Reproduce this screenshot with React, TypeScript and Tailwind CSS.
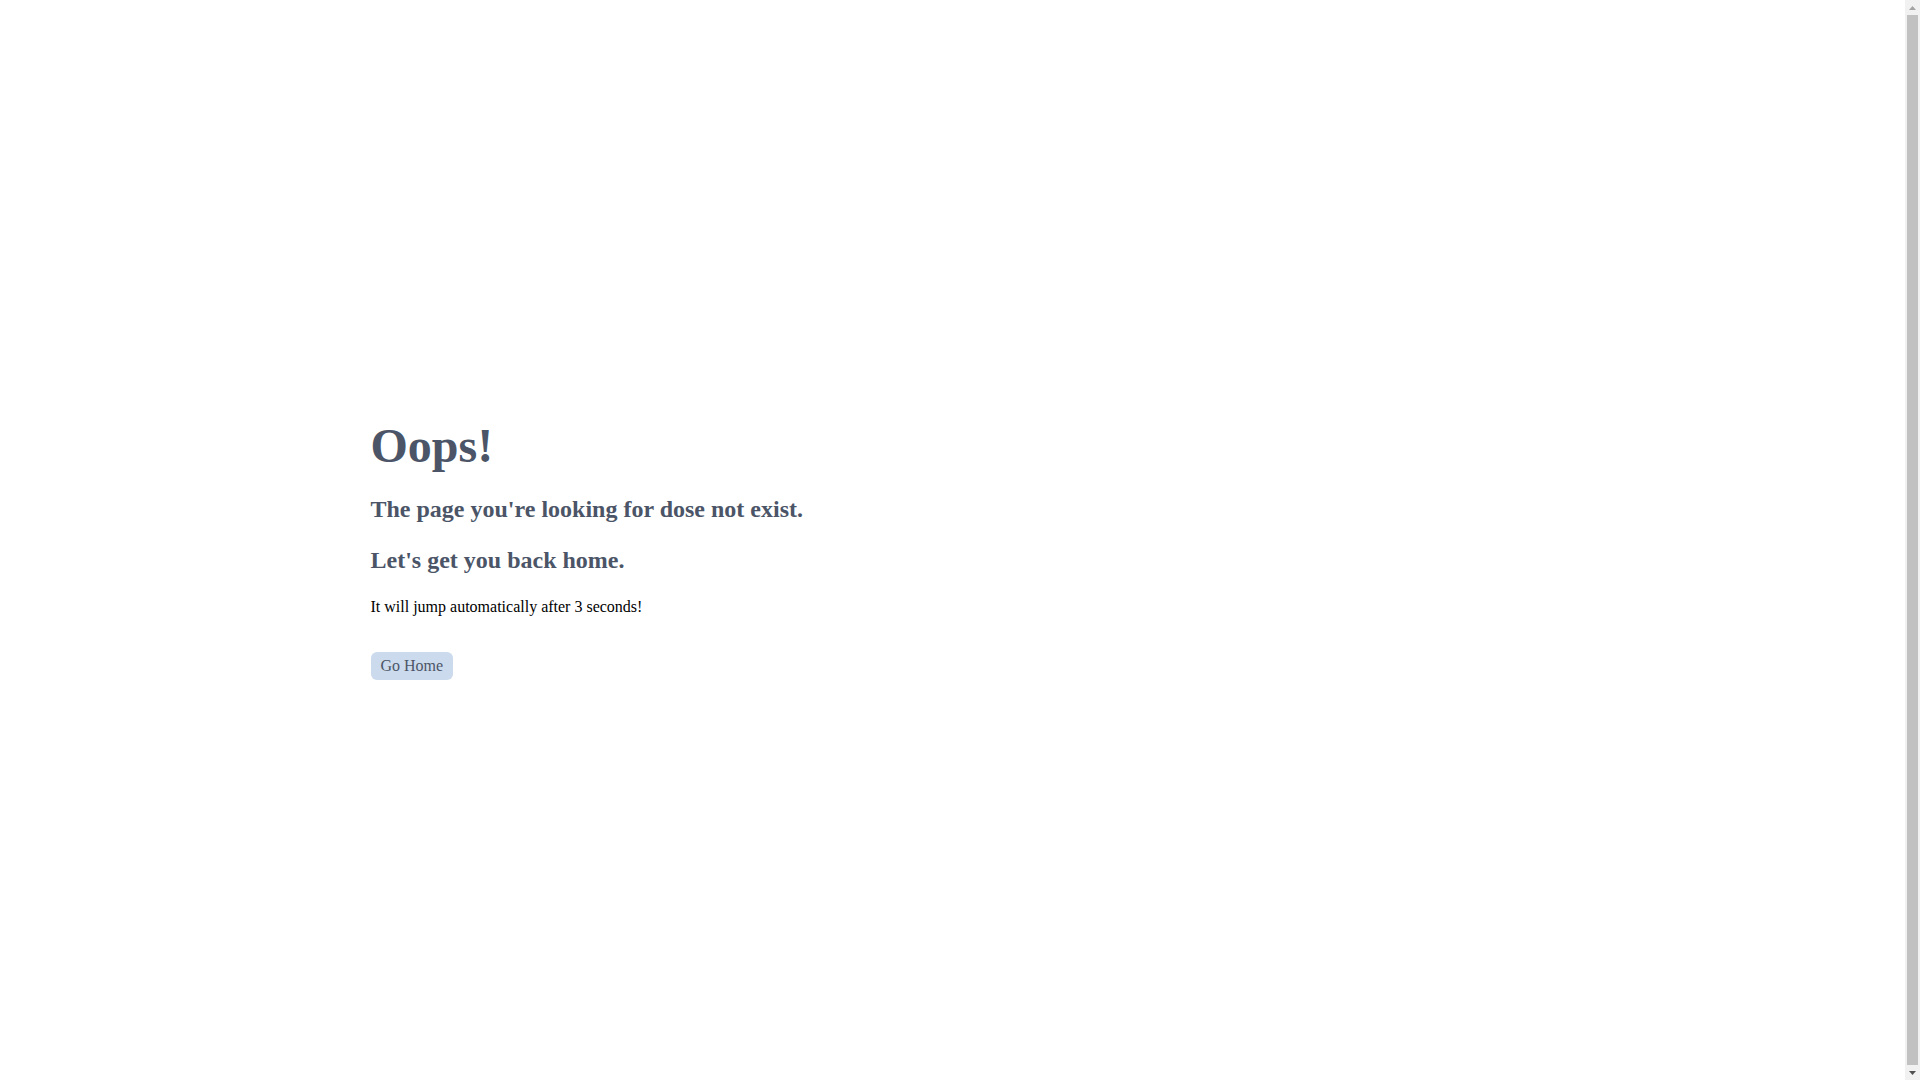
export default function App() {
  return (
    <div className="flex h-screen bg-white font-['Liberation_Serif','Times_New_Roman',serif]">
      <div className="flex-1 overflow-hidden">
        <main className="flex min-h-[1101px] items-center">
          <div className="mx-auto w-full max-w-[1164px]">
            <h1 className="text-5xl leading-none font-bold text-[#4b5567]">Oops!</h1>
            <h2 className="mt-[23px] text-2xl leading-8 font-bold text-[#4b5567]">
              The page you're looking for dose not exist.
            </h2>
            <h3 className="mt-[19px] text-2xl leading-8 font-bold text-[#4b5567]">
              Let's get you back home.
            </h3>
            <p className="mt-[19px] text-base leading-6 text-black">
              It will jump automatically after 3 seconds!
            </p>
            <a
              href="#"
              className="mt-[33px] inline-block rounded-md bg-[#cbdaed] px-2.5 py-0.5 text-base leading-6 text-[#4b5567]"
            >
              Go Home
            </a>
          </div>
        </main>
      </div>
      {/* page scrollbar */}
      <div className="flex w-[15px] flex-col bg-[#f1f1f1]">
        <div className="flex h-[15px] items-center justify-center">
          <svg width="7" height="4" viewBox="0 0 7 4">
            <path d="M0 4 L3.5 0 L7 4 Z" fill="#a3a3a3" />
          </svg>
        </div>
        <div className="mx-[2px] flex-1 bg-[#c1c1c1]" />
        <div className="flex h-[15px] items-center justify-center">
          <svg width="7" height="4" viewBox="0 0 7 4">
            <path d="M0 0 L3.5 4 L7 0 Z" fill="#505050" />
          </svg>
        </div>
      </div>
    </div>
  );
}
